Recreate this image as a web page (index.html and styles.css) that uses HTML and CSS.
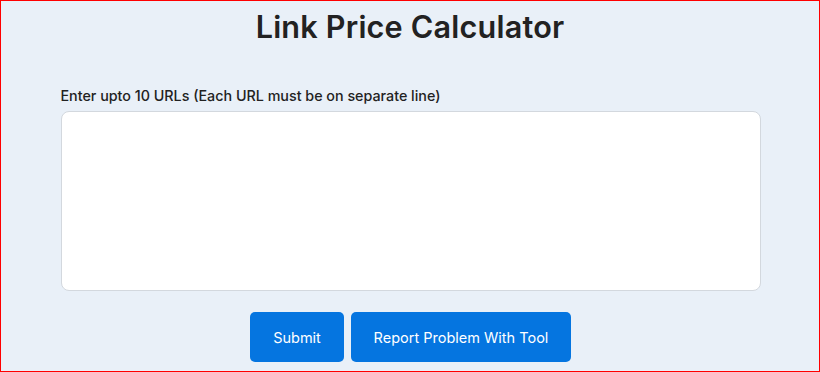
FILE: index.html
```html
<!DOCTYPE html>
<html lang="en">
<head>
<meta charset="utf-8">
<title>Link Price Calculator</title>
<link rel="stylesheet" href="styles.css">
</head>
<body>
<div class="frame">
  <h1 class="title">Link Price Calculator</h1>
  <form class="tool">
    <label class="label" for="urls">Enter upto 10 URLs (Each URL must be on separate line)</label>
    <textarea id="urls" class="urls"></textarea>
    <div class="actions">
      <button type="button" class="btn btn-submit">Submit</button>
      <button type="button" class="btn btn-report">Report Problem With Tool</button>
    </div>
  </form>
</div>
</body>
</html>
```

FILE: styles.css
```css
html, body {
  margin: 0;
  padding: 0;
}
body {
  font-family: "Inter", "Noto Sans", "Liberation Sans", sans-serif;
  color: #222;
  background: #e9f0f8;
}
.frame {
  box-sizing: border-box;
  width: 820px;
  height: 372px;
  border: 1px solid #ff0000;
  background: #e9f0f8;
  overflow: hidden;
}
.title {
  margin: 8px 0 0;
  font-size: 30.6px;
  line-height: 36px;
  font-weight: 600;
  text-align: center;
  color: #222;
  letter-spacing: 0.2px;
}
.tool {
  width: 700px;
  margin: 41px auto 0;
  padding-left: 1px;
  display: flex;
  flex-direction: column;
}
.label {
  font-size: 14.3px;
  line-height: 20px;
  font-weight: 500;
  color: #222;
  margin-bottom: 5px;
}
.urls {
  box-sizing: border-box;
  width: 700px;
  height: 180px;
  background: #fff;
  border: 1px solid #d3d8de;
  border-radius: 8px;
  resize: none;
  outline: none;
  padding: 8px 12px;
  font: inherit;
}
.actions {
  display: flex;
  justify-content: center;
  gap: 7px;
  margin-top: 21px;
}
.btn {
  height: 50px;
  border: 0;
  border-radius: 5px;
  background: #0575e0;
  color: #fff;
  font-family: inherit;
  font-size: 14.5px;
  font-weight: 400;
  padding: 0;
  cursor: pointer;
}
.btn-submit {
  width: 94px;
}
.btn-report {
  width: 220px;
}
```
